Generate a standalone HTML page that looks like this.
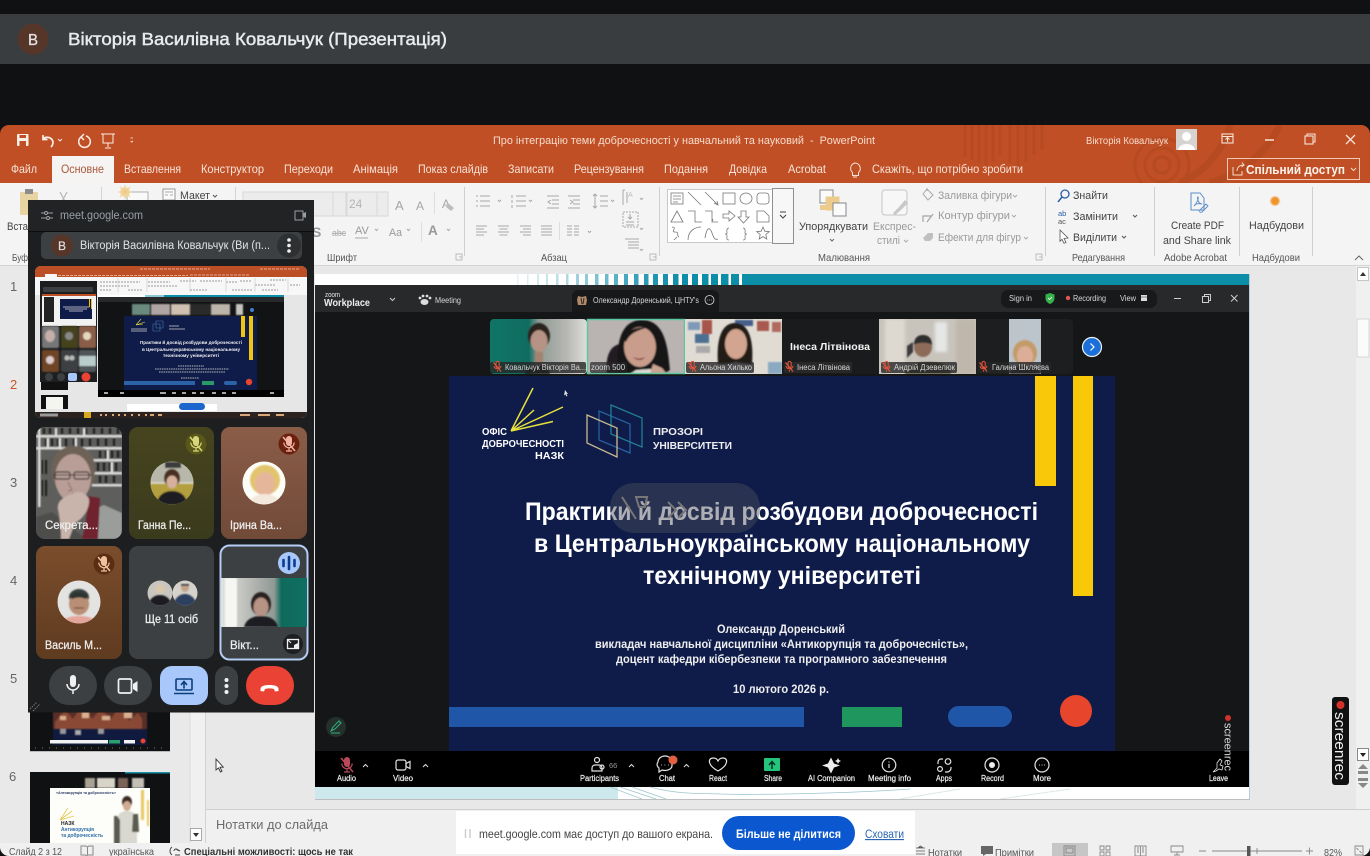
<!DOCTYPE html>
<html lang="uk">
<head>
<meta charset="utf-8">
<title>Вікторія Василівна Ковальчук (Презентація)</title>
<style>
html,body{margin:0;padding:0;background:#101113;width:1370px;height:856px;overflow:hidden}
svg{display:block;filter:blur(.3px)}
text{font-family:"Liberation Sans","Noto Sans CJK SC",sans-serif;white-space:pre}
.r{font-size:11px;fill:#444}
.d{font-size:11px;fill:#9a9a9a}
.tab{font-size:12px;fill:#f7e3d8}
.lb{font-size:10.5px;fill:#555}
.z{font-size:8px;fill:#d8d8d8}
.zb{font-size:8px;fill:#eee;stroke:#eee;stroke-width:.2}
.m{font-size:11.5px;fill:#eee;stroke:#eee;stroke-width:.25}
.h{font-size:25px;fill:#fff;font-weight:bold}
.st{font-size:10.5px;fill:#555}
.ic{fill:none;stroke:#8a8a8a;stroke-width:1}
.zi{fill:none;stroke:#e4e4e4;stroke-width:1.2}
</style>
</head>
<body>
<svg width="1370" height="856" viewBox="0 0 1370 856" xmlns="http://www.w3.org/2000/svg">
<defs>
<filter id="b1" x="-10%" y="-10%" width="120%" height="120%"><feGaussianBlur stdDeviation="0.7"/></filter>
<filter id="b2" x="-10%" y="-10%" width="120%" height="120%"><feGaussianBlur stdDeviation="1.6"/></filter>
<linearGradient id="g2" x1="0" y1="0" x2="0" y2="1"><stop offset="0" stop-color="#47451f"/><stop offset="1" stop-color="#3a3a1d"/></linearGradient>
<linearGradient id="g3" x1="0" y1="0" x2="0" y2="1"><stop offset="0" stop-color="#8a5d48"/><stop offset="1" stop-color="#714a38"/></linearGradient>
<linearGradient id="g4" x1="0" y1="0" x2="0" y2="1"><stop offset="0" stop-color="#7a4d2c"/><stop offset="1" stop-color="#5f3b20"/></linearGradient>
<linearGradient id="gv" x1="0" y1="0" x2="1" y2="0"><stop offset="0" stop-color="#e2e2de"/><stop offset=".45" stop-color="#a8aca8"/><stop offset=".62" stop-color="#8e9a94"/><stop offset=".7" stop-color="#0f6a5c"/><stop offset="1" stop-color="#0f6f60"/></linearGradient>
<linearGradient id="gk" x1="0" y1="0" x2="1" y2="0"><stop offset="0" stop-color="#0f7566"/><stop offset=".4" stop-color="#0f6d60"/><stop offset=".5" stop-color="#8e9a94"/><stop offset=".8" stop-color="#b8b8b4"/><stop offset="1" stop-color="#dededa"/></linearGradient>
<clipPath id="cT1"><rect x="36" y="427" width="86" height="112" rx="9"/></clipPath>
<clipPath id="cMini"><rect x="35" y="266" width="272" height="152" rx="6"/></clipPath>
<clipPath id="cA2"><circle cx="172" cy="483" r="21.5"/></clipPath>
<clipPath id="cA3"><circle cx="264" cy="483" r="21.5"/></clipPath>
<clipPath id="cA4"><circle cx="79" cy="602" r="21.5"/></clipPath>
<clipPath id="cA5"><circle cx="160" cy="593" r="12.5"/></clipPath>
<clipPath id="cA6"><circle cx="185" cy="593" r="12.5"/></clipPath>
<clipPath id="cV"><rect x="221" y="578" width="86" height="49"/></clipPath>
<clipPath id="cTh1"><rect x="490" y="319" width="97" height="55" rx="4"/></clipPath>
<clipPath id="cTh2"><rect x="587" y="319" width="98" height="55"/></clipPath>
<clipPath id="cTh3"><rect x="685" y="319" width="97" height="55"/></clipPath>
<clipPath id="cTh5"><rect x="879" y="319" width="97" height="55"/></clipPath>
<clipPath id="cTh6"><rect x="1009" y="319" width="32" height="55"/></clipPath>
<clipPath id="cWin"><rect x="0" y="125" width="1370" height="731" rx="9"/></clipPath>
<g id="mic0"><path d="M-3-5a3 3 0 0 1 6 0v4a3 3 0 0 1-6 0z" fill="currentColor" stroke="none"/><path d="M-5.2-1.5a5.2 5.2 0 0 0 10.4 0M0 3.8V7M-3 7h6" fill="none" stroke="currentColor" stroke-width="1.2"/><path d="M-6-7L6 7" fill="none" stroke="currentColor" stroke-width="1.6"/></g>
<g id="rmic"><path d="M-1-4a1.6 1.6 0 0 1 3.2 0v3a1.6 1.6 0 0 1-3.2 0zM-3-1a3.6 3.6 0 0 0 7 0M.5 3v1.5" fill="none" stroke="#e8543c" stroke-width="1"/><path d="M-3.5-4.5L4 4.5" stroke="#e8543c" stroke-width="1.2" fill="none"/></g>
</defs>

<!-- top chrome -->
<rect width="1370" height="856" fill="#101113"/>
<rect x="-8" y="14" width="1386" height="50" rx="9" fill="#3a3d40"/>
<circle cx="33" cy="39" r="15.5" fill="#57362a"/>
<text x="28" y="45" font-size="16" fill="#e3e3e3" stroke="#e3e3e3" stroke-width=".3" textLength="10" lengthAdjust="spacingAndGlyphs">В</text>
<text x="68" y="45" font-size="17.5" fill="#e8eaed" stroke="#e8eaed" stroke-width=".45" textLength="379" lengthAdjust="spacingAndGlyphs">Вікторія Василівна Ковальчук (Презентація)</text>

<!-- PowerPoint window -->
<g clip-path="url(#cWin)">
<rect x="0" y="125" width="1370" height="59" fill="#c04f25"/>
<g opacity=".4" fill="none" stroke="#a9431c">
<path d="M965 125v32M972 125v35M979 125v38M986 125v40M993 125v36M1000 125v30M1010 125v38M1018 125v42M1026 125v36M1034 125v30M1042 125v24" stroke-width="3"/>
<circle cx="1162" cy="165" r="8" stroke-width="3"/><circle cx="1162" cy="165" r="17" stroke-width="3"/><circle cx="1162" cy="165" r="27" stroke-width="3"/>
<path d="M1230 125a90 90 0 0 1-50 58M1280 125a110 110 0 0 1-70 58" stroke-width="7"/>
</g>

<!-- quick access toolbar -->
<g fill="none" stroke="#fbeee6" stroke-width="1.5">
<rect x="17" y="134" width="11.5" height="12" rx="1" fill="#fbeee6" stroke="none"/>
<rect x="19.5" y="135" width="6.5" height="3" fill="#c04f25" stroke="none"/><rect x="19.5" y="141" width="6.5" height="5" fill="#c04f25" stroke="none"/>
<path d="M43 139c3-3 9-2 10 3 0 2-1 4-2 5M43 135v4.500h4.500" stroke-width="1.7"/>
<path d="M62 139l-2 2-2-2" stroke-width=".9"/>
<path d="M86 136a5.800 5.800 0 1 1-5 1M84 134l-3 3 3 3"/>
<path d="M101 134h14M103 134v9h10v-9M108 143v4M105 148h6" stroke-width="1"/>
<path d="M133 138h-2.500M133 141l-1.200 1.200-1.200-1.200" stroke-width=".8"/>
</g>
<text x="493" y="144" font-size="11" fill="#f5dccd" textLength="382" lengthAdjust="spacingAndGlyphs">Про інтеграцію теми доброчесності у навчальний та науковий  -  PowerPoint</text>
<text x="1086" y="144" font-size="10" fill="#f5dccd" textLength="82" lengthAdjust="spacingAndGlyphs">Вікторія Ковальчук</text>
<rect x="1176" y="129" width="21" height="21" fill="#d6d3d1"/>
<circle cx="1186.500" cy="136.500" r="4.500" fill="#fff"/><path d="M1178 150c1-8 16-8 17 0z" fill="#fff"/>
<g fill="none" stroke="#f7e3d8" stroke-width="1.100">
<rect x="1222" y="134" width="11" height="9"/><path d="M1222 136.500h11M1227.500 142v-4M1225.500 139.500l2-2 2 2"/>
<path d="M1265 140h9" stroke-width="1.400"/>
<rect x="1305" y="136" width="8" height="8"/><path d="M1307 136v-2h8v8h-2"/>
<path d="M1346 135l9 9M1355 135l-9 9" stroke-width="1.300"/>
</g>

<!-- tabs -->
<rect x="52" y="156" width="62" height="28" fill="#f5f4f3"/>
<text class="tab" x="11" y="173" textLength="26" lengthAdjust="spacingAndGlyphs">Файл</text>
<text x="61" y="173" font-size="12" fill="#a9583a" textLength="43" lengthAdjust="spacingAndGlyphs">Основне</text>
<text class="tab" x="124" y="173" textLength="57" lengthAdjust="spacingAndGlyphs">Вставлення</text>
<text class="tab" x="201" y="173" textLength="63" lengthAdjust="spacingAndGlyphs">Конструктор</text>
<text class="tab" x="284" y="173" textLength="49" lengthAdjust="spacingAndGlyphs">Переходи</text>
<text class="tab" x="353" y="173" textLength="45" lengthAdjust="spacingAndGlyphs">Анімація</text>
<text class="tab" x="418" y="173" textLength="70" lengthAdjust="spacingAndGlyphs">Показ слайдів</text>
<text class="tab" x="508" y="173" textLength="46" lengthAdjust="spacingAndGlyphs">Записати</text>
<text class="tab" x="574" y="173" textLength="70" lengthAdjust="spacingAndGlyphs">Рецензування</text>
<text class="tab" x="664" y="173" textLength="44" lengthAdjust="spacingAndGlyphs">Подання</text>
<text class="tab" x="729" y="173" textLength="38" lengthAdjust="spacingAndGlyphs">Довідка</text>
<text class="tab" x="788" y="173" textLength="38" lengthAdjust="spacingAndGlyphs">Acrobat</text>
<path d="M855 163a5.500 5.500 0 0 1 3.500 9.500v3h-6v-3a5.500 5.500 0 0 1 2.500-9.500zM853 177h4" fill="none" stroke="#f7e3d8" stroke-width="1"/>
<text class="tab" x="872" y="173" textLength="151" lengthAdjust="spacingAndGlyphs">Скажіть, що потрібно зробити</text>
<rect x="1227.500" y="158.500" width="132" height="21" fill="none" stroke="#f3c9b3"/>
<path d="M1233 167v8h9v-4M1237 171c0-4 3-6 7-6l-2-2.500M1244 165l-2.500 2" fill="none" stroke="#f7dccc" stroke-width="1"/>
<text x="1246" y="174" font-size="12.500" font-weight="bold" fill="#fdf3ed" textLength="99" lengthAdjust="spacingAndGlyphs">Спільний доступ</text>
<path d="M1351 168l2.500 2.500 2.500-2.500" fill="none" stroke="#f7dccc"/>

<!-- ribbon -->
<rect x="0" y="183" width="1370" height="82" fill="#f4f4f4"/>
<rect x="0" y="265" width="1370" height="1" fill="#d4d4d4"/>
<!-- paste / clipboard -->
<rect x="20" y="192" width="18" height="23" rx="1" fill="#e8d3a3"/>
<rect x="25" y="189" width="8" height="5" fill="#8c8c8c"/>
<path d="M60 192l7 13M67 192l-7 13" fill="none" stroke="#b5b5b5" stroke-width="1.200"/>
<circle cx="60" cy="208" r="2.500" fill="none" stroke="#b5b5b5"/><circle cx="67" cy="208" r="2.500" fill="none" stroke="#b5b5b5"/>
<text class="r" x="7" y="230" textLength="21" lengthAdjust="spacingAndGlyphs">Вста</text>
<text class="lb" x="12" y="261" textLength="16" lengthAdjust="spacingAndGlyphs">Буф</text>
<path d="M101.500 187v58" stroke="#d4d4d4"/>
<!-- slides group -->
<rect x="127" y="192" width="21" height="16" fill="#f9f9f9" stroke="#b0b0b0"/>
<circle cx="125" cy="192" r="5" fill="#f2d9a0"/>
<path d="M125 185v14M118 192h14M120 187l10 10M130 187l-10 10" stroke="#ecca84" stroke-width=".8"/>
<rect x="163" y="189" width="12" height="11" fill="#fafafa" stroke="#999"/>
<path d="M165 192h8M165 195h3M170 195h3" stroke="#aaa"/>
<text class="r" x="180" y="199" font-size="11.500" textLength="30" lengthAdjust="spacingAndGlyphs">Макет</text>
<path d="M213 195l2 2 2-2" fill="none" stroke="#555"/>
<path d="M235.500 187v58" stroke="#d4d4d4"/>
<!-- font -->
<rect x="243" y="192" width="90" height="24" fill="#ececec" stroke="#d9d9d9"/>
<rect x="333" y="192" width="13" height="24" fill="#ececec" stroke="#d9d9d9"/>
<rect x="347" y="192" width="30" height="24" fill="#ececec" stroke="#d9d9d9"/>
<rect x="377" y="192" width="11" height="24" fill="#ececec" stroke="#d9d9d9"/>
<text x="349" y="208" font-size="12" fill="#b5b5b5">24</text>
<text x="395" y="210" font-size="13" fill="#a6a6a6">A</text>
<text x="416" y="210" font-size="12" fill="#a6a6a6">A</text>
<path d="M434.500 192v22" stroke="#ddd"/>
<text x="442" y="208" font-size="12" fill="#a6a6a6">A</text>
<path d="M448 203l6 5-3 3-5-4z" fill="#bdbdbd"/>
<text x="312" y="237" font-size="14" font-weight="bold" fill="#999">S</text>
<text x="332" y="236" font-size="9.500" fill="#aaa" textLength="14" lengthAdjust="spacingAndGlyphs" text-decoration="line-through">abc</text>
<text x="355" y="234" font-size="11" fill="#999">AV</text><path d="M355 238h13" stroke="#aaa"/>
<text x="389" y="236" font-size="11" fill="#999" textLength="13" lengthAdjust="spacingAndGlyphs">Aa</text>
<text x="428" y="235" font-size="13.500" font-weight="bold" fill="#999">A</text>
<path d="M375 229l1.500 1.500 1.500-1.500M407 229l1.500 1.500 1.500-1.500M447 229l1.500 1.500 1.500-1.500" fill="none" stroke="#aaa"/>
<path d="M421.500 222v20" stroke="#ddd"/>
<text class="lb" x="327" y="261" textLength="30" lengthAdjust="spacingAndGlyphs">Шрифт</text>
<path d="M456 254h6v6h-6zM459 257h3v3" fill="none" stroke="#aaa" stroke-width=".7"/>
<path d="M464.500 187v69" stroke="#cfcfcf"/>
<!-- paragraph -->
<g class="ic" style="stroke:#a8a8a8">
<path d="M480 196h10M480 201h10M480 206h10M476 196h2M476 201h2M476 206h2"/>
<path d="M498 200l1.500 1.500 1.500-1.500M529 200l1.500 1.500 1.500-1.500M611 200l1.500 1.500 1.500-1.500M640 198l1.500 1.500 1.500-1.500M640 228l1.500 1.500 1.500-1.500M588 231l1.500 1.500 1.500-1.500M640 249l1.500 1.500 1.500-1.500"/>
<path d="M516 196h10M516 201h10M516 206h10M512 195v3M512 200v3M512 205v3"/>
<path d="M547 196h12M552 200h7M552 204h7M547 208h12M551 200l-3 2 3 2"/>
<path d="M568 196h12M573 200h7M573 204h7M568 208h12M570 200l3 2-3 2"/>
<path d="M595 194v14M593 196l2-2 2 2M593 206l2 2 2-2M600 196h8M600 201h8M600 206h8"/>
<path d="M623 190v15M627 192v11M623 190l2 0" stroke-width="1"/>
<text x="628" y="197" font-size="7" fill="#bbb" stroke="none">A</text>
<rect x="623" y="212" width="15" height="15" stroke-dasharray="2 1"/><path d="M630 214v5M628 217l2 2 2-2M626 222h8M626 225h8"/>
<path d="M625 239h14M628 242h11M628 245h11M628 248h11"/>
<path d="M476 226h11M476 229h8M476 232h11M476 235h8"/>
<path d="M498 226h11M499.500 229h8M498 232h11M499.500 235h8"/>
<path d="M520 226h11M523 229h8M520 232h11M523 235h8"/>
<path d="M541 226h11M541 229h11M541 232h11M541 235h11"/>
<path d="M567 226h5M574 226h5M567 229h5M574 229h5M567 232h5M574 232h5M567 235h5M574 235h5"/>
<path d="M559.500 222v18" stroke="#ddd"/>
</g>
<text class="lb" x="541" y="261" textLength="26" lengthAdjust="spacingAndGlyphs">Абзац</text>
<path d="M650 254h6v6h-6zM653 257h3v3" fill="none" stroke="#aaa" stroke-width=".7"/>
<path d="M659.500 187v69" stroke="#cfcfcf"/>
<!-- shapes gallery -->
<rect x="667.500" y="189.500" width="105" height="53" fill="#fff" stroke="#c8c8c8"/>
<rect x="772.500" y="188.500" width="21" height="55" fill="#f7f7f7" stroke="#8f8f8f"/>
<path d="M780 212h6M780 215l3 3 3-3" fill="none" stroke="#444" stroke-width="1"/>
<g fill="none" stroke="#777" stroke-width=".8">
<rect x="671" y="193" width="12" height="11"/><path d="M673 196h8M673 199h8M673 202h5"/>
<path d="M688 192l13 13M705 192l13 13M714 203l4 2-1-4"/>
<rect x="723" y="193" width="12" height="11"/><ellipse cx="746" cy="198.500" rx="6" ry="5.500"/><rect x="757" y="193" width="12" height="11" rx="3"/>
<path d="M671 222l6-11 6 11zM688 211h7v11h7M705 211h7v11h6M713 219l-1 3 3 0"/>
<path d="M723 214h6v-3l6 5-6 5v-3h-6zM741 211h5v6h3l-5.500 6-5.500-6h3z"/>
<path d="M757 222v-11h7l5 5v6z"/>
<path d="M672 227c6 0-2 5 3 5s1 4 4 5M674 240l3-3" />
<path d="M688 240c0-10 8-13 13-13M705 238c2-12 5-11 7-5s3 7 6 6"/>
<path d="M729 228c-3 0-2 4-2 5s-1 1-2 1c1 0 2 0 2 2s-1 4 2 4M743 228c3 0 2 4 2 5s1 1 2 1c-1 0-2 0-2 2s1 4-2 4"/>
<path d="M763 227l1.800 4.200 4.500.4-3.500 3 1 4.400-3.800-2.400-3.800 2.400 1-4.400-3.500-3 4.500-.4z"/>
</g>
<!-- arrange -->
<rect x="820" y="190" width="13" height="13" fill="#fafafa" stroke="#888"/>
<rect x="826" y="197" width="13" height="13" fill="#eccb8c" stroke="#eccb8c"/>
<rect x="833" y="203" width="13" height="13" fill="#fafafa" stroke="#888"/>
<rect x="820" y="205" width="6" height="5" fill="#eccb8c"/>
<text class="r" x="799" y="230" textLength="69" lengthAdjust="spacingAndGlyphs">Упорядкувати</text>
<path d="M830 239l2 2 2-2" fill="none" stroke="#666"/>
<rect x="882" y="190" width="25" height="25" rx="3" fill="#f7f7f7" stroke="#c4c4c4"/>
<path d="M893 213l6-6 6-7 3 3-7 7-6 5z" fill="#c8c8c8"/>
<text class="d" x="873" y="230" textLength="43" lengthAdjust="spacingAndGlyphs">Експрес-</text>
<text class="d" x="877" y="244" textLength="23" lengthAdjust="spacingAndGlyphs">стилі</text>
<path d="M904 240l2 2 2-2M1013 195l2 2 2-2M1012 215l2 2 2-2M1024 237l2 2 2-2" fill="none" stroke="#aaa"/>
<path d="M923 194l4-5 6 6-5 5zM927 188v3" fill="none" stroke="#aaa"/>
<path d="M923 222v-6h8M927 222l6-8" fill="none" stroke="#a5a5a5" stroke-width="1.200"/>
<path d="M923 238l5-5h5v5l-3 3h-5z" fill="#c0c0c0"/>
<text class="d" x="938" y="199" textLength="74" lengthAdjust="spacingAndGlyphs">Заливка фігури</text>
<text class="d" x="938" y="219" textLength="72" lengthAdjust="spacingAndGlyphs">Контур фігури</text>
<text class="d" x="938" y="241" textLength="83" lengthAdjust="spacingAndGlyphs">Ефекти для фігур</text>
<text class="lb" x="818" y="261" textLength="52" lengthAdjust="spacingAndGlyphs">Малювання</text>
<path d="M1036 254h6v6h-6zM1039 257h3v3" fill="none" stroke="#aaa" stroke-width=".7"/>
<path d="M1045.500 187v69" stroke="#cfcfcf"/>
<!-- editing -->
<circle cx="1065" cy="194" r="4" fill="none" stroke="#2a5ea8" stroke-width="1.300"/><path d="M1062 197l-4 5" stroke="#2a5ea8" stroke-width="1.500"/>
<text x="1058" y="216" font-size="7.500" fill="#2a5ea8">ab</text><text x="1058" y="224" font-size="7.500" fill="#555">ac</text>
<path d="M1060 230l8 8-4 .500 2 4-2 .800-2-4-2 2z" fill="#fff" stroke="#555" stroke-width=".8"/>
<text class="r" x="1073" y="199" textLength="35" lengthAdjust="spacingAndGlyphs">Знайти</text>
<text class="r" x="1073" y="220" textLength="45" lengthAdjust="spacingAndGlyphs">Замінити</text>
<text class="r" x="1073" y="241" textLength="44" lengthAdjust="spacingAndGlyphs">Виділити</text>
<path d="M1133 215l2 2 2-2M1122 236l2 2 2-2" fill="none" stroke="#555"/>
<text class="lb" x="1072" y="261" textLength="53" lengthAdjust="spacingAndGlyphs">Редагування</text>
<path d="M1154.500 187v69" stroke="#cfcfcf"/>
<path d="M1191 193h9l4 5v12h-13z" fill="none" stroke="#5a8dc8"/>
<path d="M1194 206c3-3 5-8 4-9s-1 6 4 7c-5-1-6 0-8 2zM1200 210l6-6 2 2-6 6a2 2 0 0 1-3-2z" fill="none" stroke="#5a8dc8" stroke-width=".9"/>
<text class="r" x="1171" y="229" textLength="53" lengthAdjust="spacingAndGlyphs">Create PDF</text>
<text class="r" x="1163" y="244" textLength="68" lengthAdjust="spacingAndGlyphs">and Share link</text>
<text class="lb" x="1164" y="261" textLength="63" lengthAdjust="spacingAndGlyphs">Adobe Acrobat</text>
<path d="M1239.500 187v69" stroke="#cfcfcf"/>
<circle cx="1275" cy="201" r="4.500" fill="#f0932b" filter="url(#b1)"/>
<text class="r" x="1249" y="229" textLength="55" lengthAdjust="spacingAndGlyphs">Надбудови</text>
<text class="lb" x="1252" y="261" textLength="48" lengthAdjust="spacingAndGlyphs">Надбудови</text>
<path d="M1312.500 187v69" stroke="#cfcfcf"/>
<path d="M1355 260l4-4 4 4" fill="none" stroke="#666"/>

<!-- left panel + stage -->
<rect x="0" y="266" width="205" height="580" fill="#e9e9e9"/>
<rect x="190" y="266" width="15" height="580" fill="#f0f0f0"/>
<rect x="205" y="266" width="1165" height="580" fill="#e8e8e8"/>
<rect x="205" y="266" width="1" height="580" fill="#d2d2d2"/>
<text x="10" y="291" font-size="13" fill="#666">1</text>
<text x="10" y="389" font-size="13" fill="#c8552a">2</text>
<text x="10" y="487" font-size="13" fill="#666">3</text>
<text x="10" y="585" font-size="13" fill="#666">4</text>
<text x="10" y="683" font-size="13" fill="#666">5</text>
<text x="9" y="781" font-size="13" fill="#666">6</text>
<!-- thumb 5 -->
<rect x="30" y="700" width="140" height="51" fill="#0f1113"/>
<rect x="53" y="700" width="94" height="45" fill="#101a3e"/>
<g filter="url(#b1)"><rect x="53" y="700" width="94" height="29" fill="#5a2f28"/><path d="M55 722l10-12 8 9 10-14 9 14 9-10 10 10 8-12 10 14 9-8 4 6v10H55z" fill="#8a4a34"/><path d="M60 716h6v4h-6zM82 712h7v6h-7zM102 716h8v4h-8zM124 712h8v6h-8z" fill="#d8b090"/><rect x="60" y="729" width="6" height="5" fill="#999"/><rect x="75" y="730" width="6" height="5" fill="#aaa"/><rect x="98" y="729" width="6" height="5" fill="#999"/></g>
<rect x="50" y="740" width="58" height="3.500" fill="#f2f2f2"/><rect x="109" y="740" width="11" height="3.500" fill="#2aa06a"/><rect x="124" y="740" width="11" height="3.500" fill="#f2f2f2"/><circle cx="143" cy="741" r="2.500" fill="#e8442c"/>
<path d="M35 748h130" stroke="#777" stroke-dasharray="1 6"/>
<rect x="30" y="751" width="140" height="1" fill="#bbb"/>
<!-- thumb 6 -->
<rect x="30" y="772" width="140" height="74" fill="#0f1113"/>
<rect x="125" y="772" width="45" height="1.500" fill="#1a8ea6"/>
<g filter="url(#b1)"><rect x="85" y="778" width="10" height="10" fill="#a9a295"/><rect x="97" y="778" width="18" height="10" fill="#d9d4c8"/><rect x="118" y="778" width="10" height="10" fill="#7d6458"/><rect x="132" y="778" width="12" height="10" fill="#c4bfb5"/></g>
<rect x="50" y="788" width="100" height="58" fill="#fdfdf9"/>
<text x="56" y="794" font-size="4" font-weight="bold" fill="#2a3a66" textLength="60" lengthAdjust="spacingAndGlyphs">«Антикорупція та доброчесність»</text>
<path d="M60 820l12-9M60 820l14-4M60 820l8-12" stroke="#e2c84a" stroke-width=".8" fill="none"/>
<text x="61" y="825" font-size="5" font-weight="bold" fill="#222">НАЗК</text>
<text x="61" y="831" font-size="5.500" font-weight="bold" fill="#2e6fa8" textLength="33" lengthAdjust="spacingAndGlyphs">Антикорупція</text>
<text x="61" y="837" font-size="5.500" font-weight="bold" fill="#2e6fa8" textLength="42" lengthAdjust="spacingAndGlyphs">та доброчесність</text>
<g filter="url(#b1)"><ellipse cx="127" cy="802" rx="5" ry="6" fill="#3a2a22"/><ellipse cx="127" cy="806" rx="4" ry="5" fill="#d0ac92"/><path d="M117 846v-26c0-7 6-9 10-9s10 2 10 9v26z" fill="#d8d8d0"/><path d="M117 816h-3v30h6v-26zM133 814h5l1 18h-7z" fill="#5a5a50"/><path d="M141 790h3v30h-3zM147 800h2v26h-2z" fill="#e8c860"/></g>
<path d="M190 266v580" stroke="#ddd"/>
<rect x="190.500" y="828.500" width="11" height="12" fill="#fff" stroke="#aaa"/>
<path d="M193 833h6l-3 4z" fill="#333"/>
<!-- cursor -->
<path d="M216 759v11l2.500-2 2 4 1.500-.8-2-4 3.300 0z" fill="#fff" stroke="#333" stroke-width=".9"/>

<!-- Right scrollbar -->
<rect x="1356" y="266" width="14" height="580" fill="#f0f0f0"/>
<rect x="1357" y="319" width="12" height="38" fill="#fbfbfb" stroke="#d6d6d6"/>
<rect x="1357.500" y="267.500" width="11" height="13" fill="#fff" stroke="#c5c5c5"/><path d="M1360 276h6l-3-4z" fill="#333"/>
<rect x="1357.500" y="748.500" width="11" height="12" fill="#fff" stroke="#888"/><path d="M1360 753h6l-3 4z" fill="#222"/>
<path d="M1363 764l5 5h-10zM1358 771h10v3h-10z" fill="#888"/>
<path d="M1363 788l5-5h-10zM1358 778h10v3h-10z" fill="#888"/>

<!-- SLIDE -->
<rect x="315" y="274" width="934" height="525" fill="#fff"/>
<rect x="1249" y="274" width="1" height="525" fill="#bcd"/>
<rect x="742" y="274" width="507" height="11" fill="#0d8ea8"/>
<g>
<rect x="517" y="274" width="1.500" height="11" fill="#e6f2f4"/><rect x="527" y="274" width="1.500" height="11" fill="#dbeef1"/><rect x="537" y="274" width="2" height="11" fill="#d2e9ee"/><rect x="546" y="274" width="2" height="11" fill="#c8e5eb"/><rect x="556" y="274" width="2.500" height="11" fill="#bcdfe7"/><rect x="566" y="274" width="2.500" height="11" fill="#aed8e2"/><rect x="576" y="274" width="3" height="11" fill="#9ed1dd"/><rect x="585" y="274" width="3" height="11" fill="#90cbd8"/><rect x="595" y="274" width="3.500" height="11" fill="#7fc2d2"/><rect x="605" y="274" width="3.500" height="11" fill="#6cb9cb"/><rect x="614" y="274" width="4" height="11" fill="#5bb1c5"/><rect x="624" y="274" width="4" height="11" fill="#49a8bf"/><rect x="634" y="274" width="4.500" height="11" fill="#3aa1ba"/><rect x="644" y="274" width="4.500" height="11" fill="#2d9bb5"/><rect x="653" y="274" width="5" height="11" fill="#2096b1"/><rect x="663" y="274" width="5" height="11" fill="#1892ae"/><rect x="673" y="274" width="5.500" height="11" fill="#1290ab"/><rect x="682" y="274" width="6" height="11" fill="#0e8ea9"/><rect x="692" y="274" width="6" height="11" fill="#0d8ea8"/><rect x="702" y="274" width="6.500" height="11" fill="#0d8ea8"/><rect x="711" y="274" width="7" height="11" fill="#0d8ea8"/><rect x="721" y="274" width="7.500" height="11" fill="#0d8ea8"/><rect x="731" y="274" width="8" height="11" fill="#0d8ea8"/>
</g>
<!-- Zoom window -->
<rect x="315" y="285" width="934" height="502" fill="#141617"/>
<rect x="315" y="285" width="934" height="27" fill="#27292b"/>
<text x="325" y="297" font-size="7" fill="#e8e8e8" textLength="15" lengthAdjust="spacingAndGlyphs">zoom</text>
<text x="324" y="306" font-size="10" font-weight="bold" fill="#eee" textLength="46" lengthAdjust="spacingAndGlyphs">Workplace</text>
<path d="M390 298l2.500 2.500 2.500-2.500" fill="none" stroke="#ccc"/>
<g fill="#ddd"><circle cx="423" cy="296" r="1.400"/><circle cx="420" cy="298" r="1.400"/><circle cx="427" cy="296" r="1.400"/><circle cx="430" cy="298" r="1.400"/><ellipse cx="424.500" cy="302" rx="4" ry="3"/></g>
<text class="z" x="435" y="303" textLength="26" lengthAdjust="spacingAndGlyphs">Meeting</text>
<path d="M572 312v-16a6 6 0 0 1 6-6h135a6 6 0 0 1 6 6v16z" fill="#16181a"/>
<path d="M578 296l4 1 4-1 1 4-1 5h-8l-1-5z" fill="#b08a6a"/><path d="M581 298l1 6M584 298l-1 6" stroke="#3a2a22"/>
<text class="z" x="593" y="303" textLength="106" lengthAdjust="spacingAndGlyphs">Олександр Доренський, ЦНТУ's</text>
<circle cx="709.500" cy="300" r="4.500" fill="none" stroke="#ddd" stroke-width=".8"/><path d="M707.500 300h.6M709.200 300h.6M711 300h.6" stroke="#ddd"/>
<rect x="1001" y="290" width="156" height="18" rx="7" fill="#17191a"/>
<text class="z" x="1009" y="301" textLength="23" lengthAdjust="spacingAndGlyphs">Sign in</text>
<path d="M1050 293l4.500 1.500v3.500c0 3-2 5-4.500 6-2.500-1-4.500-3-4.500-6v-3.500z" fill="#35b24c"/><path d="M1048 298l1.500 1.500 2.500-2.500" fill="none" stroke="#fff" stroke-width=".8"/>
<circle cx="1068" cy="298" r="2.200" fill="#e25555"/>
<text class="z" x="1073" y="301" textLength="33" lengthAdjust="spacingAndGlyphs">Recording</text>
<text class="z" x="1120" y="301" textLength="16" lengthAdjust="spacingAndGlyphs">View</text>
<path d="M1141 295h6v6h-6z" fill="#ddd"/><path d="M1141 297h6" stroke="#222" stroke-width=".6"/>
<g fill="none" stroke="#ccc" stroke-width="1"><path d="M1174 298.500h7"/><rect x="1202.500" y="296.500" width="6" height="6"/><path d="M1204.500 296v-1.500h6v6h-1.500"/><path d="M1231 295l6.500 6.500M1237.500 295l-6.500 6.500"/></g>

<!-- participants thumbs -->
<rect x="490" y="319" width="583" height="55" rx="4" fill="#1c1e20"/>
<g clip-path="url(#cTh1)"><rect x="490" y="319" width="97" height="55" fill="url(#gk)"/><g filter="url(#b1)"><path d="M525 374c1-8 8-9 13-9s11 1 12 9z" fill="#1d2020"/><ellipse cx="539" cy="336" rx="11" ry="13" fill="#2a201b"/><ellipse cx="539" cy="341" rx="8.500" ry="11" fill="#b69384"/><path d="M535 352h8v12h-8z" fill="#a5826f"/></g></g>
<rect x="587" y="319" width="98" height="55" fill="#b9b3b2"/>
<g clip-path="url(#cTh2)"><g filter="url(#b1)"><path d="M607 374c-2-15 2-30 15-30v30z" fill="#211f22"/><path d="M618 374c-2-25 0-54 24-54s26 30 28 50l-6 4z" fill="#181618"/><ellipse cx="640" cy="347" rx="16" ry="20" fill="#c99d8c"/><path d="M624 340c2-14 28-18 34-2-2-6-6-8-12-10-6 2-16 4-20 14z" fill="#181618"/><path d="M633 357c3 2 9 2 12 0-2 4-9 4-12 0z" fill="#8c3a34"/><path d="M630 374h34v-3l-14-2-14 1z" fill="#dcd8d2"/><path d="M650 374l3-10 9 4 5 6z" fill="#c9a391"/></g></g>
<rect x="587.500" y="319.500" width="97" height="54" fill="none" stroke="#5ec7a1" stroke-width="1.500"/>
<g clip-path="url(#cTh3)"><rect x="685" y="319" width="97" height="55" fill="#e0dcd4"/><g filter="url(#b1)"><rect x="688" y="322" width="12" height="8" fill="#7f9ab8"/><rect x="702" y="320" width="10" height="14" fill="#a8554a"/><rect x="695" y="334" width="14" height="9" fill="#4c6f90"/><rect x="696" y="346" width="14" height="7" fill="#aaa"/><rect x="735" y="320" width="18" height="6" fill="#445f8a"/><rect x="757" y="321" width="12" height="10" fill="#a85850"/><rect x="772" y="322" width="9" height="10" fill="#b06a60"/><rect x="768" y="362" width="14" height="12" fill="#8ba9c0"/><path d="M718 364c-2-26 4-41 17-41s19 15 17 41z" fill="#241a18"/><ellipse cx="736" cy="344" rx="11" ry="15" fill="#d3a48f"/><path d="M722 374c1-8 7-11 14-11s15 3 16 11z" fill="#dfe4ea"/></g></g>
<rect x="782" y="319" width="97" height="55" fill="#191b1c"/>
<text x="790" y="350" font-size="10.500" font-weight="bold" fill="#f2f2f2" textLength="80" lengthAdjust="spacingAndGlyphs">Інеса Літвінова</text>
<g clip-path="url(#cTh5)"><rect x="879" y="319" width="97" height="55" fill="#c8c4bc"/><g filter="url(#b2)"><rect x="885" y="319" width="20" height="55" fill="#ded9d0"/><rect x="935" y="322" width="12" height="30" fill="#e5e7e7"/><rect x="956" y="319" width="20" height="55" fill="#bfb7ab"/></g><g filter="url(#b1)"><path d="M905 374c1-10 12-12 23-12s22 2 23 12z" fill="#5a5640"/><ellipse cx="923" cy="347" rx="9" ry="10" fill="#8c6c58"/><path d="M914 345c0-9 6-10 9-10s9 1 9 10c-3-3-15-3-18 0z" fill="#2e2e2e"/><path d="M913 352l-6 6v-12l6-4z" fill="#3a3a3a"/></g></g>
<g clip-path="url(#cTh6)"><rect x="1009" y="319" width="32" height="55" fill="#bcc5cc"/><g filter="url(#b1)"><ellipse cx="1025" cy="353" rx="12" ry="13" fill="#c39b68"/><ellipse cx="1025" cy="356" rx="8" ry="10" fill="#dcae98"/><path d="M1009 374c2-6 8-8 16-8s14 2 16 8z" fill="#3a3236"/></g></g>
<g font-size="8">
<rect x="490" y="362" width="96" height="11" rx="2" fill="#262626" opacity=".8"/>
<rect x="590" y="362" width="37" height="11" rx="2" fill="#262626" opacity=".7"/>
<rect x="686" y="362" width="68" height="11" rx="2" fill="#262626" opacity=".8"/>
<rect x="784" y="362" width="68" height="11" rx="2" fill="#2a2a2a" opacity=".9"/>
<rect x="881" y="362" width="76" height="11" rx="2" fill="#262626" opacity=".8"/>
<rect x="978" y="362" width="73" height="11" rx="2" fill="#262626" opacity=".8"/>
</g>
<use href="#rmic" transform="translate(497,367)"/><use href="#rmic" transform="translate(692,367)"/><use href="#rmic" transform="translate(789,367)"/><use href="#rmic" transform="translate(886,367)"/><use href="#rmic" transform="translate(983,367)"/>
<text class="z" x="505" y="370" textLength="81" lengthAdjust="spacingAndGlyphs">Ковальчук Вікторія Ва...</text>
<text class="z" x="591" y="370" textLength="34" lengthAdjust="spacingAndGlyphs">zoom 500</text>
<text class="z" x="700" y="370" textLength="52" lengthAdjust="spacingAndGlyphs">Альона Хилько</text>
<text class="z" x="797" y="370" textLength="53" lengthAdjust="spacingAndGlyphs">Інеса Літвінова</text>
<text class="z" x="894" y="370" textLength="61" lengthAdjust="spacingAndGlyphs">Андрій Дзевелюк</text>
<text class="z" x="992" y="370" textLength="57" lengthAdjust="spacingAndGlyphs">Галина Шкляєва</text>
<circle cx="1092" cy="347" r="9.500" fill="#1a6fd8" stroke="#f1f1f1" stroke-width="1.200"/>
<path d="M1090.500 343.500l3.500 3.500-3.500 3.500" fill="none" stroke="#fff" stroke-width="1.200"/>

<!-- presentation slide -->
<rect x="449" y="376" width="666" height="375" fill="#0f1c4a"/>
<rect x="1035" y="376" width="21" height="110" fill="#f9c808"/>
<rect x="1073" y="376" width="20" height="220" fill="#f9c808"/>
<path d="M511 431L533 388M511 431L534 410M511 431L563 407M511 431L553 421.500" stroke="#e8e13c" stroke-width="1.500" fill="none"/>
<text x="482" y="435" font-size="10.500" font-weight="bold" fill="#fff" textLength="25" lengthAdjust="spacingAndGlyphs">ОФІС</text>
<text x="482" y="447" font-size="10.500" font-weight="bold" fill="#fff" textLength="82" lengthAdjust="spacingAndGlyphs">ДОБРОЧЕСНОСТІ</text>
<text x="535" y="459" font-size="10.500" font-weight="bold" fill="#fff" textLength="29" lengthAdjust="spacingAndGlyphs">НАЗК</text>
<path d="M599 411l31 13v29l-31-13z" fill="none" stroke="#27619c" stroke-width="1.300"/>
<path d="M611 405l31 13v29l-31-13z" fill="none" stroke="#21808f" stroke-width="1.300"/>
<path d="M587 415l30 13v29l-30-14z" fill="none" stroke="#cbb98f" stroke-width="1.300"/>
<text x="653" y="435" font-size="10.500" font-weight="bold" fill="#eee" textLength="50" lengthAdjust="spacingAndGlyphs">ПРОЗОРІ</text>
<text x="653" y="449" font-size="10.500" font-weight="bold" fill="#eee" textLength="79" lengthAdjust="spacingAndGlyphs">УНІВЕРСИТЕТИ</text>
<path d="M565 390l3 4-1.500 0 1 2-1 .5-1-2-1.500 1z" fill="#ddd"/>
<text class="h" x="525" y="520" textLength="513" lengthAdjust="spacingAndGlyphs">Практики й досвід розбудови доброчесності</text>
<text class="h" x="534" y="552" textLength="496" lengthAdjust="spacingAndGlyphs">в Центральноукраїнському національному</text>
<text class="h" x="643" y="584" textLength="278" lengthAdjust="spacingAndGlyphs">технічному університеті</text>
<rect x="610" y="483" width="150" height="50" rx="24" fill="#4a4d5c" opacity=".45"/>
<path d="M622 497l14 22M645 507h-6l-3-10h11zM668 502l8 8-8 8M678 502l8 8-8 8" fill="none" stroke="#777" stroke-width="2"/>
<g font-size="12" font-weight="bold" fill="#eee">
<text x="717" y="633" textLength="128" lengthAdjust="spacingAndGlyphs">Олександр Доренський</text>
<text x="595" y="648" textLength="373" lengthAdjust="spacingAndGlyphs">викладач навчальної дисципліни «Антикорупція та доброчесність»,</text>
<text x="616" y="663" textLength="331" lengthAdjust="spacingAndGlyphs">доцент кафедри кібербезпеки та програмного забезпечення</text>
<text x="733" y="693" textLength="96" lengthAdjust="spacingAndGlyphs">10 лютого 2026 р.</text>
</g>
<rect x="449" y="707" width="355" height="20" fill="#2056a8"/>
<rect x="842" y="707" width="60" height="20" fill="#20965f"/>
<rect x="948" y="706" width="64" height="21" rx="10.500" fill="#2056a8"/>
<circle cx="1076" cy="711" r="16" fill="#e7452c"/>
<circle cx="336" cy="727" r="10" fill="#25302d"/>
<path d="M331 731l2-4 6-6 2 2-6 6zM331 733h9" fill="none" stroke="#30b07e" stroke-width="1"/>

<!-- zoom toolbar -->
<rect x="315" y="751" width="934" height="36" fill="#000"/>
<g style="color:#b8485a"><use href="#mic0" transform="translate(347,765)"/></g>
<path d="M363 767l2.500-2.500 2.500 2.500M423 767l2.500-2.500 2.500 2.500M629 767l2.500-2.500 2.500 2.500M684 767l2.500-2.500 2.500 2.500" fill="none" stroke="#ddd"/>
<rect x="396" y="760" width="10" height="10" rx="2" class="zi"/><path d="M406 763.500l4-2v7l-4-2z" class="zi"/>
<g class="zi"><circle cx="597" cy="760" r="2.500"/><path d="M592 771v-3a3 3 0 0 1 3-3h4a3 3 0 0 1 3 3v3z"/><circle cx="602" cy="767" r="2"/></g>
<text x="609" y="768" font-size="7.500" fill="#999">66</text>
<g class="zi"><path d="M658 762a7 6 0 0 1 14 0v4a7 5 0 0 1-10 4l-3 2v-4a7 5 0 0 1-1-6z"/></g>
<path d="M661 765h.7M664.500 765h.7M668 765h.7" stroke="#eee"/>
<circle cx="673" cy="760" r="4.500" fill="#e5603f"/>
<path d="M718 771c-11-6-10-13-5-13 3 0 4 1 5 3 1-2 3-3 5-3 5 0 6 7-5 13z" class="zi"/>
<rect x="764" y="758" width="16" height="13" rx="1" fill="#23c57c"/>
<path d="M772 769v-7M769 765l3-3.500 3 3.500" fill="none" stroke="#06301f" stroke-width="1.500"/>
<path d="M831 760l3 6 6 2-6 2-3 6-3-6-6-2 6-2z" transform="translate(0,-2.500)" fill="#eee"/><path d="M838 758l1 2 2 1-2 1-1 2-1-2-2-1 2-1z" fill="#eee"/>
<circle cx="889" cy="765" r="6.800" class="zi"/><path d="M889 764v4M889 761.500v1" stroke="#eee" stroke-width="1.100"/>
<g class="zi"><path d="M938 764v-2a3 3 0 0 1 3-3h2"/><circle cx="948" cy="761.500" r="2.800"/><circle cx="940" cy="769" r="2.400"/><path d="M951 767v1a4 4 0 0 1-4 4h-2"/></g>
<circle cx="992" cy="765" r="7" class="zi"/><circle cx="992" cy="765" r="3" fill="#eee"/>
<circle cx="1042" cy="765" r="7" class="zi"/><path d="M1039 765h.9M1041.600 765h.9M1044.200 765h.9" stroke="#eee"/>
<path d="M1213 772l4-4v-5l3-4 2 2-2 4 3 1-1 4-3-1-3 2z" class="zi" style="stroke-width:.8"/>
<text class="zb" x="337" y="781" textLength="19" lengthAdjust="spacingAndGlyphs">Audio</text>
<text class="zb" x="393" y="781" textLength="20" lengthAdjust="spacingAndGlyphs">Video</text>
<text class="zb" x="580" y="781" textLength="39" lengthAdjust="spacingAndGlyphs">Participants</text>
<text class="zb" x="659" y="781" textLength="16" lengthAdjust="spacingAndGlyphs">Chat</text>
<text class="zb" x="709" y="781" textLength="18" lengthAdjust="spacingAndGlyphs">React</text>
<text class="zb" x="764" y="781" textLength="18" lengthAdjust="spacingAndGlyphs">Share</text>
<text class="zb" x="808" y="781" textLength="47" lengthAdjust="spacingAndGlyphs">AI Companion</text>
<text class="zb" x="868" y="781" textLength="43" lengthAdjust="spacingAndGlyphs">Meeting info</text>
<text class="zb" x="936" y="781" textLength="16" lengthAdjust="spacingAndGlyphs">Apps</text>
<text class="zb" x="981" y="781" textLength="23" lengthAdjust="spacingAndGlyphs">Record</text>
<text class="zb" x="1033" y="781" textLength="18" lengthAdjust="spacingAndGlyphs">More</text>
<text class="zb" x="1209" y="781" textLength="19" lengthAdjust="spacingAndGlyphs">Leave</text>
<!-- screenrec small -->
<circle cx="1228" cy="718" r="3" fill="#d0322c"/>
<text transform="translate(1224.500,723) rotate(90)" font-size="11" fill="#ddd" textLength="48" lengthAdjust="spacingAndGlyphs">screenrec</text>
<!-- below zoom -->
<rect x="315" y="787" width="303" height="12" fill="#cde9ee"/>
<path d="M610 787l32 12M620 787l36 12M632 787l34 12M650 787c30 8 50 6 70 7s120 0 190-5" fill="none" stroke="#9cc7cf" stroke-width=".8"/>
<path d="M900 799l60-10M1000 799l70-10" fill="none" stroke="#dce8e8"/>
<rect x="315" y="799" width="935" height="1" fill="#bdbdbd"/>
<!-- screenrec large -->
<rect x="1332" y="697" width="17" height="88" rx="3" fill="#111"/>
<circle cx="1340.500" cy="705" r="4" fill="#d6322c"/>
<text transform="translate(1335,712) rotate(90)" font-size="15" fill="#f2f2f2" textLength="68" lengthAdjust="spacingAndGlyphs">screenrec</text>

<!-- notes -->
<rect x="206" y="809" width="1164" height="37" fill="#f0f0f0"/>
<rect x="206" y="809" width="1164" height="1" fill="#cfcfcf"/>
<text x="216" y="829" font-size="13" fill="#6b6b6b" textLength="112" lengthAdjust="spacingAndGlyphs">Нотатки до слайда</text>

<!-- status -->
<rect x="0" y="843" width="1370" height="13" fill="#f0f0f0"/>
<text class="st" x="9" y="855" textLength="53" lengthAdjust="spacingAndGlyphs">Слайд 2 з 12</text>
<path d="M81 846h5l1.500 1 1.500-1h4v9h-5.500l-1 1-1-1H81zM87.500 847v8" fill="none" stroke="#888"/>
<text class="st" x="109" y="855" textLength="45" lengthAdjust="spacingAndGlyphs">українська</text>
<path d="M172 847a5 5 0 0 0 0 8M178 851a2 2 0 1 0-4 0M175 855h5M176 849l4 2" fill="none" stroke="#444" stroke-width="1"/>
<text x="184" y="855" font-size="10.500" font-weight="bold" fill="#333" textLength="169" lengthAdjust="spacingAndGlyphs">Спеціальні можливості: щось не так</text>
<path d="M916 848h9M916 851h9M920.500 846l-2 1.500h4zM916 854h9" fill="none" stroke="#555" stroke-width=".8"/>
<text class="st" x="928" y="856" textLength="34" lengthAdjust="spacingAndGlyphs">Нотатки</text>
<path d="M981 846h12v8h-7l-3 2v-2h-2z" fill="#666"/>
<text class="st" x="995" y="856" textLength="39" lengthAdjust="spacingAndGlyphs">Примітки</text>
<rect x="1052" y="843" width="36" height="13" fill="#c6c6c6"/>
<g fill="none" stroke="#888" stroke-width=".9">
<path d="M1064 846h11v10h-11zM1066 848h7v5h-7z"/>
<path d="M1100 846h4v4h-4zM1106 846h4v4h-4zM1100 852h4v4h-4zM1106 852h4v4h-4z"/>
<path d="M1135 846h11v10h-11zM1140.500 846v10M1137 848h2M1137 850h2M1137 852h2M1142 848h2M1142 850h2M1142 852h2"/>
<path d="M1171 846h12v6h-12zM1177 852v3M1174 855h6"/>
<path d="M1199 851h7M1306 851h7M1309.500 847.500v7M1212 851h90M1257 848v6" />
<path d="M1355 846h8v9h-8zM1356.500 848l2 2M1361.500 853l-2-2" />
</g>
<rect x="1247" y="846" width="3.500" height="10" fill="#555"/>
<text class="st" x="1324" y="856" textLength="18" lengthAdjust="spacingAndGlyphs">82%</text>

<!-- Chrome sharing bar -->
<rect x="456" y="811" width="459" height="43" fill="#fff"/>
<path d="M465.500 829v9M470 829v9" stroke="#cfcfcf" stroke-width="1.500"/>
<text x="479" y="838" font-size="12" fill="#444" textLength="234" lengthAdjust="spacingAndGlyphs">meet.google.com має доступ до вашого екрана.</text>
<rect x="722" y="816" width="133" height="34" rx="17" fill="#0b57d0"/>
<text x="736" y="838" font-size="11.500" font-weight="bold" fill="#fff" textLength="105" lengthAdjust="spacingAndGlyphs">Більше не ділитися</text>
<text x="865" y="838" font-size="11.500" fill="#2a66b0" text-decoration="underline" textLength="39" lengthAdjust="spacingAndGlyphs">Сховати</text>
</g>

<!-- Meet PiP -->
<rect x="28" y="200" width="286" height="512" fill="#1c1e20"/>
<rect x="28" y="200" width="286" height="31" fill="#212325"/>
<rect x="28" y="231" width="286" height="1" fill="#0c0d0e"/>
<path d="M41 213h3M50 218h3M47 213h6M41 218h6" stroke="#9aa0a6" stroke-width="1.100"/>
<circle cx="46" cy="213" r="1.500" fill="none" stroke="#9aa0a6"/><circle cx="48" cy="218" r="1.500" fill="none" stroke="#9aa0a6"/>
<text x="60" y="219" font-size="11.500" fill="#9aa0a6" textLength="83" lengthAdjust="spacingAndGlyphs">meet.google.com</text>
<rect x="295" y="211" width="8" height="9" fill="none" stroke="#9aa0a6"/><path d="M303 213.500l3-1.500v6l-3-1.500z" fill="#9aa0a6"/>
<rect x="41" y="232" width="261" height="27" rx="5" fill="#3c4043"/>
<circle cx="62" cy="245.500" r="11" fill="#57362a"/>
<text x="58" y="250" font-size="12" fill="#ddd" stroke="#ddd" stroke-width=".2" textLength="8" lengthAdjust="spacingAndGlyphs">В</text>
<text x="80" y="249" font-size="11.500" fill="#e3e3e3" textLength="190" lengthAdjust="spacingAndGlyphs">Вікторія Василівна Ковальчук (Ви (п...</text>
<circle cx="289" cy="245.500" r="12" fill="#2e3032"/>
<g fill="#f1f1f1"><circle cx="289" cy="240" r="1.800"/><circle cx="289" cy="245.500" r="1.800"/><circle cx="289" cy="251" r="1.800"/></g>

<!-- mini screen -->
<g clip-path="url(#cMini)">
<rect x="35" y="266" width="272" height="152" fill="#e6e6e6"/>
<rect x="35" y="266" width="272" height="11" fill="#bd4f26"/>
<rect x="35" y="277" width="272" height="18" fill="#f7f7f7"/>
<rect x="45" y="274" width="12" height="3" fill="#f7f7f7"/>
<path d="M58 275.500h130M140 269h70M260 269h40M190 275h60" stroke="#f0c8b0" stroke-width=".8" stroke-dasharray="3 1"/>
<path d="M100 282h40M100 286h30M148 282h22M148 286h30M180 281h16M200 281h22M226 282h12M240 281h12M255 285h20M270 280h16M290 285h10M100 290h12M128 290h14M190 290h18M232 290h20M262 290h16" stroke="#999" stroke-width=".9" stroke-dasharray="2 1"/>
<path d="M118 278v14M147 278v14M190 278v14M226 278v14M255 278v14M288 278v14" stroke="#ccc" stroke-width=".7"/>
<!-- mini teal -->
<rect x="98" y="295" width="186" height="2.500" fill="#fff"/><rect x="145" y="295" width="19" height="2.500" fill="#8cc6d4"/><rect x="164" y="295" width="120" height="2.500" fill="#0d8ea8"/>
<rect x="98" y="297" width="186" height="100" fill="#111315"/>
<rect x="98" y="297" width="186" height="5" fill="#28292b"/>
<g filter="url(#b1)"><rect x="132" y="304" width="18" height="11" fill="#6b8a80"/><rect x="151" y="304" width="19" height="11" fill="#b0a5a5"/><rect x="171" y="304" width="19" height="11" fill="#cfc0b0"/><rect x="191" y="304" width="19" height="11" fill="#2b2b2b"/><rect x="211" y="304" width="19" height="11" fill="#bdb5a9"/><rect x="236" y="304" width="7" height="11" fill="#c5c5c0"/></g>
<circle cx="252" cy="310" r="2" fill="#3f7fd0"/>
<rect x="124" y="316" width="133" height="74" fill="#0f1c4a"/>
<rect x="241" y="316" width="4" height="21" fill="#f1c40f"/><rect x="249" y="316" width="4" height="44" fill="#f1c40f"/>
<path d="M136 325l5-6M136 325l9-3M136 325l7-1" stroke="#e8e13c" stroke-width=".6"/>
<path d="M156 321h7v7h-7zM153 324h7v7h-7z" stroke="#4878a8" fill="none" stroke-width=".6"/>
<path d="M131 329h16M131 331h16M169 326h10M169 329h16" stroke="#ccc" stroke-width=".8"/>
<g font-size="4.900" font-weight="bold" fill="#eee">
<text x="140" y="344" textLength="102" lengthAdjust="spacingAndGlyphs">Практики й досвід розбудови доброчесності</text>
<text x="142" y="351" textLength="98" lengthAdjust="spacingAndGlyphs">в Центральноукраїнському національному</text>
<text x="163" y="357" textLength="56" lengthAdjust="spacingAndGlyphs">технічному університеті</text>
</g>
<path d="M178 366h26M155 369h74M159 372h66M181 378h18" stroke="#bbb" stroke-width=".9" stroke-dasharray="1.500 .8"/>
<rect x="124" y="381" width="71" height="4" fill="#2c62a8"/><rect x="202" y="381" width="12" height="4" fill="#2a9a68"/><rect x="224" y="381" width="13" height="4" rx="2" fill="#2c62a8"/><circle cx="249" cy="382" r="3.200" fill="#e7452c"/>
<rect x="98" y="390" width="186" height="7" fill="#000"/>
<path d="M104 393h4M120 393h4M160 393h6M172 393h4M182 393h4M192 393h4M200 393h4M212 393h4M222 393h4M232 393h4M270 393h4" stroke="#ddd" stroke-width="1.500"/>
<!-- mini pip -->
<rect x="40" y="281" width="57" height="101" fill="#1c1e20"/>
<rect x="43" y="287" width="50" height="5" rx="1" fill="#3c4043"/>
<rect x="42" y="294" width="54" height="32" fill="#f2f2f2"/>
<rect x="42" y="294" width="54" height="2" fill="#bd4f26"/>
<rect x="44" y="297" width="10" height="25" fill="#222"/>
<rect x="60" y="299" width="32" height="20" fill="#0f1c4a"/>
<path d="M63 307h26M65 309h22M69 311h14" stroke="#ddd" stroke-width=".7"/>
<path d="M89 299h1v8h-1zM91 299h1v10h-1z" fill="#f1c40f"/>
<g filter="url(#b1)">
<rect x="42" y="326" width="17" height="22" rx="2" fill="#777"/><rect x="61" y="326" width="17" height="22" rx="2" fill="#45431f"/><rect x="79" y="326" width="17" height="22" rx="2" fill="#8a5d48"/>
<rect x="42" y="350" width="17" height="22" rx="2" fill="#6f4526"/><rect x="61" y="350" width="17" height="22" rx="2" fill="#3c4043"/><rect x="79" y="350" width="17" height="22" rx="2" fill="#505458"/>
<ellipse cx="50" cy="336" rx="5" ry="6" fill="#c4b0a8"/><circle cx="69" cy="336" r="4" fill="#888"/><circle cx="87" cy="336" r="4" fill="#e6d8c0"/><circle cx="50" cy="360" r="4" fill="#dcc"/><circle cx="67" cy="358" r="2.500" fill="#bbb"/><circle cx="72" cy="358" r="2.500" fill="#bbb"/><rect x="79" y="356" width="17" height="10" fill="#bcc"/>
</g>
<circle cx="49" cy="377" r="4" fill="#3c4043"/><circle cx="61" cy="377" r="4" fill="#3c4043"/><rect x="68" y="373" width="9" height="8" rx="2" fill="#a8c7fa"/><circle cx="86" cy="377" r="4.500" fill="#ea4335"/>
<rect x="40" y="382" width="57" height="30" fill="#e6e6e6"/>
<rect x="41" y="382" width="27" height="8" fill="#111"/>
<rect x="41" y="395" width="27" height="14" fill="#111"/><rect x="46" y="397" width="17" height="12" fill="#f5f5f0"/>
<rect x="127" y="404" width="90" height="7" fill="#fff"/><rect x="179" y="403" width="26" height="7" rx="3.500" fill="#1a66cc"/>
<rect x="35" y="412" width="272" height="7" fill="#2c2220"/>
<path d="M100 415h2M105 415h2M112 415h2M118 415h2M124 415h2M131 415h2M138 415h2M145 415h2M150 415h4M158 415h4M240 415h10M258 415h12M276 415h8" stroke="#d8a878" stroke-width="2"/>
<rect x="84" y="412" width="7" height="6" fill="#d8a820"/><path d="M40 415h18" stroke="#999" stroke-width="3"/>
</g>

<!-- Tiles -->
<g clip-path="url(#cT1)">
<rect x="36" y="427" width="86" height="112" fill="#5e5e5c"/>
<g filter="url(#b1)">
<g fill="#dcdcda"><rect x="36" y="435" width="86" height="2.500"/><rect x="36" y="447" width="86" height="2.500"/><rect x="92" y="459" width="30" height="2.500"/><rect x="92" y="472" width="30" height="2.500"/><rect x="92" y="484" width="30" height="2.500"/><rect x="38" y="427" width="2.500" height="80"/></g>
<g stroke-width="2"><path d="M44 428v7M50 428v7M56 428v7M62 428v7M70 428v7M78 428v7M86 428v7M94 428v7M102 428v7M110 428v7M118 428v7M46 438v9M52 438v9M58 438v9M66 438v9M74 438v9M82 438v9M90 438v9M98 438v9M106 438v9M114 438v9M100 450v9M106 450v9M112 450v9M118 450v9M98 462v10M104 462v10M110 462v10M116 462v10M100 475v9M106 475v9M114 475v9M42 460v14M46 460v14M42 480v16M46 480v16" stroke="#1f1f1f"/><path d="M48 438v9M60 438v9M84 428v7M108 450v9M112 462v10M56 428v7M76 438v9" stroke="#efefef"/></g>
<path d="M36 539v-22l16-5 34 27z" fill="#4e4e4c"/>
<path d="M92 539c0-22 4-32 12-34l18 8v26z" fill="#9a9d9a"/>
<path d="M53 480c-6-22 6-34 21-34s24 10 20 34l-4 10-34-2z" fill="#6e6257"/>
<ellipse cx="73" cy="478" rx="18" ry="24" fill="#b89e96"/>
<path d="M53 475h39" stroke="#3a3a3a" stroke-width="1"/><rect x="55" y="472" width="15" height="7" rx="2" fill="none" stroke="#333" stroke-width="1.200"/><rect x="74" y="472" width="15" height="7" rx="2" fill="none" stroke="#333" stroke-width="1.200"/>
<path d="M68 482l4 8-4 1" fill="none" stroke="#8c706a"/>
<path d="M72 494h12" stroke="#7a3a3c" stroke-width="1.500"/>
<path d="M87 496l13 2-2 41H82c4-14 6-30 5-43z" fill="#70232f"/>
<path d="M58 510c-2-10 8-14 14-16 6-4 14-2 17 5 1 10-6 20-14 24l-6 16h-8c0-10-1-20-3-29z" fill="#c8b4aa"/>
</g>
</g>
<rect x="129" y="427" width="85" height="112" rx="9" fill="url(#g2)"/>
<rect x="221" y="427" width="86" height="112" rx="9" fill="url(#g3)"/>
<rect x="36" y="546" width="86" height="113" rx="9" fill="url(#g4)"/>
<rect x="129" y="546" width="85" height="113" rx="9" fill="#3c4043"/>
<rect x="220.500" y="545.500" width="87" height="114" rx="9" fill="#3c4043" stroke="#b5cdf5" stroke-width="2"/>
<circle cx="196" cy="444" r="10.500" fill="#595819"/>
<circle cx="289" cy="444" r="10.500" fill="#6b200d"/>
<circle cx="104" cy="564" r="10.500" fill="#5a2e12"/>
<g style="color:#d8d67a"><use href="#mic0" transform="translate(196,444)"/></g>
<g style="color:#f0b3a3"><use href="#mic0" transform="translate(289,444)"/></g>
<g style="color:#eec3a0"><use href="#mic0" transform="translate(104,564)"/></g>
<!-- avatars -->
<circle cx="172" cy="483" r="21.500" fill="#d8d2c4"/>
<g clip-path="url(#cA2)"><g filter="url(#b1)"><rect x="150" y="462" width="44" height="20" fill="#b8b8aa"/><rect x="150" y="484" width="44" height="24" fill="#b39f3e"/><rect x="165" y="462" width="16" height="6" fill="#3a3a3a"/><ellipse cx="172" cy="478" rx="8" ry="9" fill="#4a2e22"/><ellipse cx="172" cy="482" rx="5.500" ry="6.500" fill="#d6b09a"/><path d="M156 505c2-10 8-14 16-14s14 4 16 14z" fill="#1d1d22"/></g></g>
<circle cx="264" cy="483" r="21.500" fill="#fdfdf8"/>
<g clip-path="url(#cA3)"><g filter="url(#b1)"><ellipse cx="265" cy="480" rx="15" ry="15" fill="#e2c46e"/><ellipse cx="265" cy="484" rx="10" ry="12" fill="#e6b69a"/><path d="M249 505c2-9 10-11 16-11s14 2 16 11z" fill="#f4e7dc"/></g></g>
<circle cx="79" cy="602" r="21.500" fill="#e3e3e1"/>
<g clip-path="url(#cA4)"><g filter="url(#b1)"><ellipse cx="79" cy="597" rx="10" ry="8" fill="#38403e"/><ellipse cx="79" cy="604" rx="10" ry="11" fill="#b88e74"/><path d="M70 596c4-5 14-5 18 0l-2 3c-4-2-10-2-14 0z" fill="#2c3432"/><path d="M74 608h10" stroke="#5a3a2c"/><path d="M60 625c3-7 10-9 19-9s16 2 19 9z" fill="#e4a69a"/></g></g>
<circle cx="160" cy="593" r="12.500" fill="#c9c6c0"/>
<g clip-path="url(#cA5)"><g filter="url(#b1)"><circle cx="160" cy="589" r="4.500" fill="#dbc8ac"/><path d="M148 606c1-7 6-11 12-11s11 4 12 11z" fill="#1c1e22"/></g></g>
<circle cx="185" cy="593" r="12.500" fill="#d6d3cc"/>
<g clip-path="url(#cA6)"><g filter="url(#b1)"><circle cx="185" cy="588" r="4" fill="#c4a488"/><path d="M181 584h8v2h-8z" fill="#4a4a52"/><path d="M173 606c1-7 6-12 12-12s11 5 12 12z" fill="#2f3f5e"/></g></g>
<!-- self video -->
<g clip-path="url(#cV)"><rect x="221" y="578" width="86" height="49" fill="url(#gv)"/><g filter="url(#b1)"><rect x="225" y="578" width="12" height="49" fill="#f6f6f4"/><ellipse cx="261" cy="604" rx="10" ry="12" fill="#2b2220"/><ellipse cx="261" cy="607" rx="7.500" ry="9.500" fill="#b69384"/><path d="M244 627c2-8 9-11 17-11s15 3 17 11z" fill="#1a1c20"/></g></g>
<circle cx="289" cy="563" r="11" fill="#a8c7fa"/>
<path d="M283.500 560v6M289 557v12M294.500 560v6" stroke="#0b3d8f" stroke-width="2.600" stroke-linecap="round"/>
<circle cx="293" cy="644" r="10" fill="#1c1e20"/>
<rect x="287.500" y="639.500" width="11" height="9" fill="none" stroke="#eee" stroke-width="1.300"/><path d="M294 645l4-2v5h-4z" fill="#eee"/><path d="M288 640l3 3" stroke="#eee"/>
<g class="m">
<text x="45" y="529" textLength="53" lengthAdjust="spacingAndGlyphs">Секрета...</text>
<text x="138" y="529" textLength="53" lengthAdjust="spacingAndGlyphs">Ганна Пе...</text>
<text x="230" y="529" textLength="52" lengthAdjust="spacingAndGlyphs">Ірина Ва...</text>
<text x="45" y="649" textLength="57" lengthAdjust="spacingAndGlyphs">Василь М...</text>
<text x="145" y="623" textLength="53" lengthAdjust="spacingAndGlyphs">Ще 11 осіб</text>
<text x="230" y="649" textLength="29" lengthAdjust="spacingAndGlyphs">Вікт...</text>
</g>
<!-- Meet controls -->
<rect x="49" y="666" width="48" height="39" rx="19.500" fill="#3c4043"/>
<rect x="104" y="666" width="48" height="39" rx="19.500" fill="#3c4043"/>
<rect x="160" y="666" width="48" height="39" rx="12" fill="#a8c7fa"/>
<rect x="215" y="666" width="23" height="39" rx="11.500" fill="#3c4043"/>
<rect x="246" y="666" width="48" height="39" rx="19.500" fill="#ea4335"/>
<g fill="#f1f1f1">
<path d="M70 678a3 3 0 0 1 6 0v6a3 3 0 0 1-6 0z"/>
<path d="M67 684a6 6 0 0 0 12 0M73 690v4" fill="none" stroke="#f1f1f1" stroke-width="1.500"/>
<path d="M120 679h10a1.500 1.500 0 0 1 1.500 1.500v11a1.500 1.500 0 0 1-1.500 1.500h-10a1.500 1.500 0 0 1-1.500-1.500v-11a1.500 1.500 0 0 1 1.500-1.500z" fill="none" stroke="#f1f1f1" stroke-width="1.700"/>
<path d="M133 684l4.500-3v11l-4.500-3z"/>
</g>
<rect x="176" y="679" width="16" height="11" rx="1" fill="none" stroke="#0b3f7c" stroke-width="1.600"/>
<path d="M174 693.500h20" stroke="#0b3f7c" stroke-width="1.500"/>
<path d="M184 688.500v-6M181 685l3-3.500 3 3.500" fill="none" stroke="#0b3f7c" stroke-width="1.600"/>
<g fill="#f1f1f1"><circle cx="226.500" cy="680" r="2"/><circle cx="226.500" cy="686" r="2"/><circle cx="226.500" cy="692" r="2"/></g>
<path d="M260.500 689c0-3 4-4 9-4s9 1 9 4v2l-3.500.5-1-2.500c-3-.8-6-.8-9 0l-1 2.500-3.500-.5z" fill="#fff"/>
<path d="M30 709l7-7M33 711l7-7" stroke="#777" stroke-width="1" stroke-dasharray="1.500 1"/>
<rect x="28" y="712" width="286" height="1" fill="#1a1a1a" opacity=".5"/>
</svg>
</body>
</html>
